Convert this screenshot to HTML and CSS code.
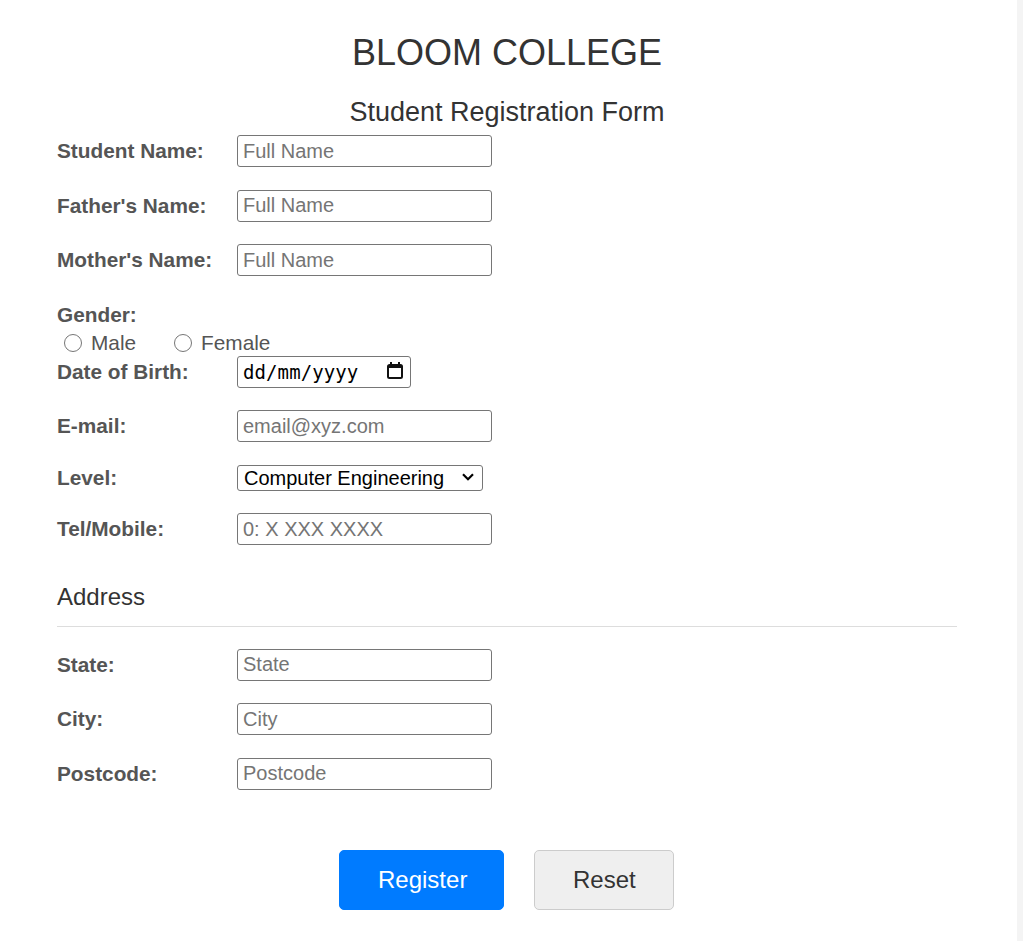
FILE: index.html
```html
<!DOCTYPE html>
<html lang="en-GB">
<head>
<meta charset="utf-8">
<title>Bloom College - Student Registration</title>
<link rel="stylesheet" href="styles.css">
</head>
<body>
<div class="page">
  <main class="main">
    <div class="wrap">
      <h1 class="title">BLOOM COLLEGE</h1>
      <h2 class="subtitle">Student Registration Form</h2>
      <form class="form">
        <div class="row">
          <label class="label" for="sname">Student Name:</label>
          <input class="field" id="sname" type="text" placeholder="Full Name">
        </div>
        <div class="row">
          <label class="label" for="fname">Father's Name:</label>
          <input class="field" id="fname" type="text" placeholder="Full Name">
        </div>
        <div class="row">
          <label class="label" for="mname">Mother's Name:</label>
          <input class="field" id="mname" type="text" placeholder="Full Name">
        </div>
        <div class="row row-gender">
          <span class="label">Gender:</span>
        </div>
        <div class="radios">
          <label class="radio"><input type="radio" name="gender" class="radio-input"><span>Male</span></label>
          <label class="radio"><input type="radio" name="gender" class="radio-input"><span>Female</span></label>
        </div>
        <div class="row">
          <label class="label" for="dob">Date of Birth:</label>
          <div class="date-wrap">
            <input class="date" id="dob" type="text" placeholder="dd/mm/yyyy" inputmode="numeric">
            <svg class="cal-icon" width="16" height="17" viewBox="0 0 16 17" aria-hidden="true">
              <rect x="3" y="0" width="2" height="4" fill="#111"/>
              <rect x="11" y="0" width="2" height="4" fill="#111"/>
              <path d="M2.5 3h11A1.5 1.5 0 0 1 15 4.5v10A1.5 1.5 0 0 1 13.5 16h-11A1.5 1.5 0 0 1 1 14.5v-10A1.5 1.5 0 0 1 2.5 3z" fill="none" stroke="#111" stroke-width="2"/>
              <rect x="1" y="3" width="14" height="3" fill="#111"/>
            </svg>
          </div>
        </div>
        <div class="row">
          <label class="label" for="email">E-mail:</label>
          <input class="field" id="email" type="email" placeholder="email@xyz.com">
        </div>
        <div class="row">
          <label class="label" for="level">Level:</label>
          <div class="select-wrap">
            <select class="select" id="level">
              <option>Computer Engineering</option>
              <option>Electrical Engineering</option>
              <option>Civil Engineering</option>
            </select>
            <svg class="chevron" width="12" height="8" viewBox="0 0 12 8" aria-hidden="true">
              <path d="M1 1.2 6 6.2 11 1.2" fill="none" stroke="#000" stroke-width="2.2"/>
            </svg>
          </div>
        </div>
        <div class="row">
          <label class="label" for="tel">Tel/Mobile:</label>
          <input class="field" id="tel" type="tel" placeholder="0: X XXX XXXX">
        </div>

        <h3 class="section">Address</h3>
        <hr class="divider">

        <div class="row">
          <label class="label" for="state">State:</label>
          <input class="field" id="state" type="text" placeholder="State">
        </div>
        <div class="row">
          <label class="label" for="city">City:</label>
          <input class="field" id="city" type="text" placeholder="City">
        </div>
        <div class="row">
          <label class="label" for="postcode">Postcode:</label>
          <input class="field" id="postcode" type="text" placeholder="Postcode">
        </div>

        <div class="actions">
          <button type="submit" class="btn btn-primary">Register</button>
          <button type="reset" class="btn btn-secondary">Reset</button>
        </div>
      </form>
    </div>
  </main>
  <div class="edge"></div>
</div>
</body>
</html>
```

FILE: styles.css
```css
html, body {
  margin: 0;
  padding: 0;
  background: #ffffff;
}

body {
  font-family: "Liberation Sans", Arial, sans-serif;
  color: #333;
}

.page {
  display: flex;
  min-height: 941px;
}

.main {
  flex: 1;
}

.edge {
  width: 6px;
  background: #f4f4f4;
}

.wrap {
  width: 900px;
  margin-left: 57px;
}

.title {
  margin: 32px 0 0;
  font-size: 36px;
  line-height: 41px;
  font-weight: normal;
  text-align: center;
  color: #333;
}

.subtitle {
  margin: 24px 0 0;
  font-size: 27px;
  line-height: 31px;
  font-weight: normal;
  text-align: center;
  color: #333;
}

.form {
  margin: 7px 0 0;
}

.row {
  display: flex;
  align-items: center;
  margin-bottom: 22.5px;
}

.row-gender {
  height: 32px;
  margin-bottom: 0;
}

.label {
  width: 180px;
  flex: none;
  font-size: 20.8px;
  line-height: 24px;
  font-weight: bold;
  color: #555;
}

.field {
  box-sizing: border-box;
  width: 255px;
  height: 32px;
  margin: 0;
  padding: 0 5px;
  border: 1px solid #767676;
  border-radius: 3px;
  font-family: "Liberation Sans", Arial, sans-serif;
  font-size: 20px;
  color: #000;
  background: #fff;
}

.field::placeholder {
  color: #757575;
}

.date-wrap {
  position: relative;
  width: 174px;
  height: 32px;
}

.date {
  box-sizing: border-box;
  width: 174px;
  height: 32px;
  margin: 0;
  padding: 0 30px 0 5px;
  border: 1px solid #767676;
  border-radius: 3px;
  font-family: "DejaVu Sans Mono", "Liberation Mono", monospace;
  font-size: 19px;
  letter-spacing: 0.1px;
  color: #000;
  background: #fff;
}

.date::placeholder {
  color: #000;
}

.cal-icon {
  position: absolute;
  left: 150px;
  top: 6px;
  pointer-events: none;
}

.select-wrap {
  position: relative;
  width: 246px;
  height: 26px;
}

.select {
  box-sizing: border-box;
  width: 246px;
  height: 26px;
  margin: 0;
  padding: 0 24px 0 6px;
  border: 1px solid #767676;
  border-radius: 3px;
  font-family: "Liberation Sans", Arial, sans-serif;
  font-size: 20px;
  color: #000;
  background: #fff;
  appearance: none;
  -webkit-appearance: none;
}

.chevron {
  position: absolute;
  left: 225px;
  top: 8px;
  pointer-events: none;
}

.radios {
  display: flex;
  align-items: center;
  height: 25px;
  padding-left: 7px;
  gap: 38px;
}

.radio {
  display: flex;
  align-items: center;
  gap: 9px;
  font-size: 20.8px;
  line-height: 24px;
  color: #555;
}

.radio-input {
  width: 18px;
  height: 18px;
  margin: 0;
}

.section {
  margin: 37.5px 0 0;
  font-size: 24px;
  line-height: 28px;
  font-weight: normal;
  color: #333;
}

.divider {
  margin: 15px 0 22px;
  border: 0;
  border-top: 1px solid #dddddd;
  height: 0;
}

.actions {
  display: flex;
  justify-content: center;
  gap: 30px;
  margin-top: 60px;
  padding-right: 1px;
}

.btn {
  box-sizing: border-box;
  height: 60px;
  padding: 0 38px;
  border-radius: 5px;
  font-family: "Liberation Sans", Arial, sans-serif;
  font-size: 24px;
  cursor: pointer;
}

.btn-primary {
  width: 165px;
  background: #007bff;
  border: 1px solid #007bff;
  color: #fff;
}

.btn-secondary {
  width: 140px;
  background: #efefef;
  border: 1px solid #cccccc;
  color: #333;
}
```
